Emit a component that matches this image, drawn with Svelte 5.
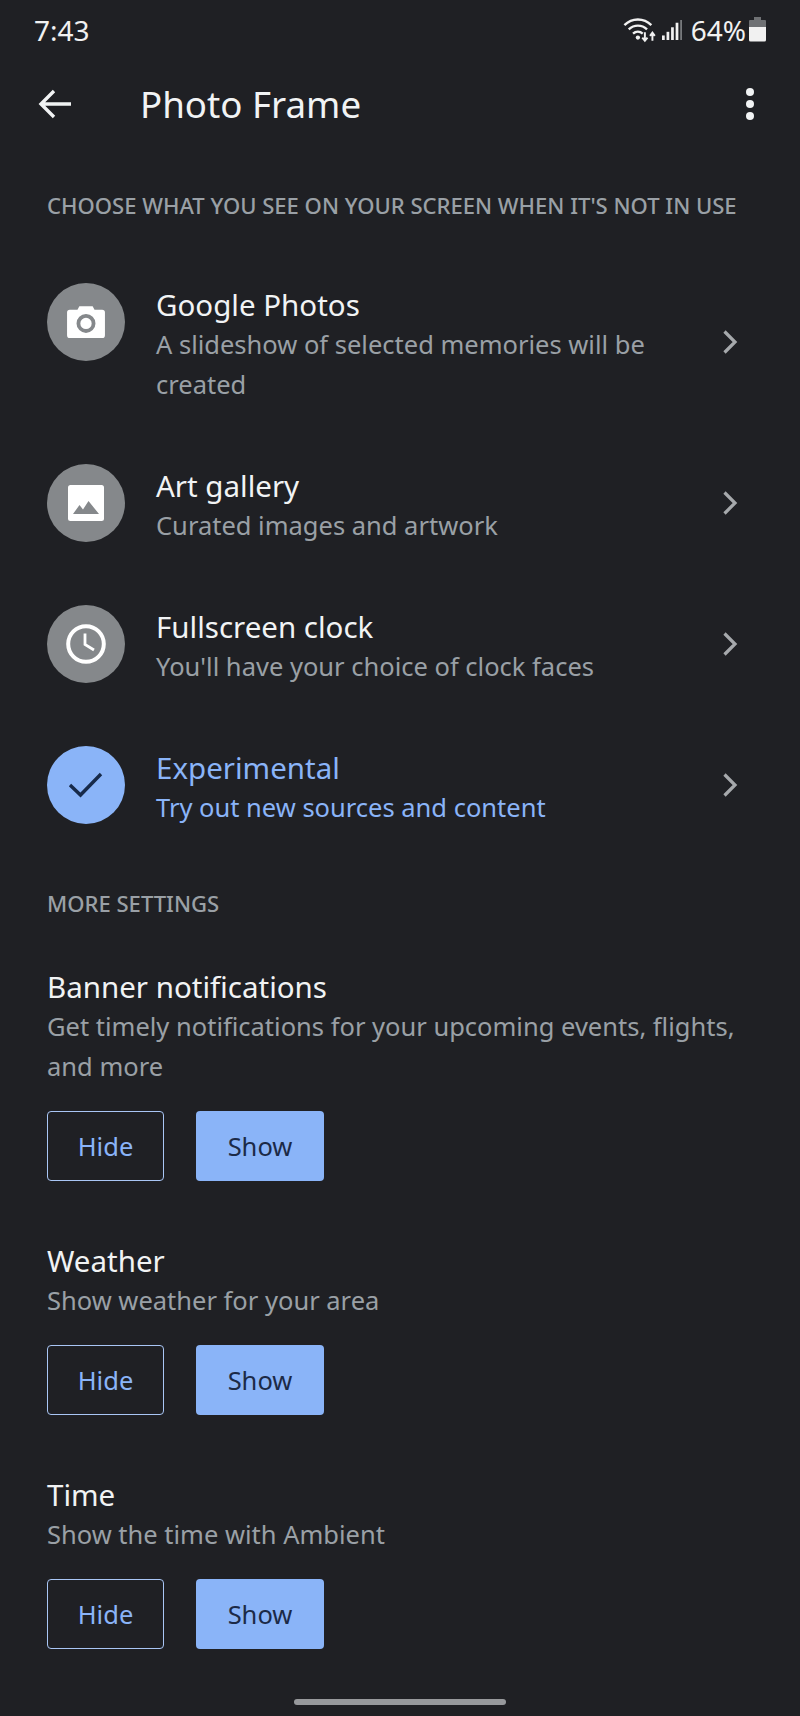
<script>
  const sources = [
    { title: 'Google Photos', sub: 'A slideshow of selected memories will be created', icon: 'camera' },
    { title: 'Art gallery', sub: 'Curated images and artwork', icon: 'image' },
    { title: 'Fullscreen clock', sub: "You'll have your choice of clock faces", icon: 'clock' },
    { title: 'Experimental', sub: 'Try out new sources and content', icon: 'check', active: true }
  ];
  const settings = [
    { title: 'Banner notifications', sub: 'Get timely notifications for your upcoming events, flights, and more' },
    { title: 'Weather', sub: 'Show weather for your area' },
    { title: 'Time', sub: 'Show the time with Ambient' }
  ];
</script>

<div class="page">
  <div class="status">
    <span class="clock">7:43</span>
    <div class="status-right">
      <svg class="wifi" width="35" height="28" viewBox="0 0 32 26" fill="none">
        <path d="M2 8.500C9 1.500 20 1.500 27 8.500" stroke="#f1f1f1" stroke-width="2.200" />
        <path d="M6 12.500C11 7.800 18 7.800 23 12.500" stroke="#f1f1f1" stroke-width="2.200" />
        <path d="M10 16.300C12.600 14 16.400 14 19 16.300" stroke="#f1f1f1" stroke-width="2.200" />
        <circle cx="14.500" cy="20" r="2" fill="#f1f1f1" />
        <path d="M21 15V22M18.600 20L21 23L23.400 20" stroke="#f1f1f1" stroke-width="1.800" />
        <path d="M28 23V16M25.800 18.500L28 15.500L30.200 18.500" stroke="#f1f1f1" stroke-width="1.800" />
      </svg>
      <svg class="signal" width="20" height="24" viewBox="0 0 22 24">
        <rect x="0" y="18" width="3" height="5" fill="#f1f1f1" />
        <rect x="5" y="14" width="3" height="9" fill="#f1f1f1" />
        <rect x="10" y="9" width="3" height="14" fill="#f1f1f1" />
        <rect x="15" y="4" width="3" height="19" fill="#f1f1f1" />
        <rect x="20" y="1" width="2" height="22" fill="#77797c" />
      </svg>
      <span class="pct">64%</span>
      <svg class="battery" width="17" height="25" viewBox="0 0 17 25">
        <path d="M5 0H12V3H16A1 1 0 0 1 17 4V11H0V4A1 1 0 0 1 1 3H5Z" fill="#6f7174" />
        <path d="M0 10H17V23A1.500 1.500 0 0 1 15.500 24.500H1.500A1.500 1.500 0 0 1 0 23Z" fill="#f1f1f1" />
      </svg>
    </div>
  </div>

  <header class="appbar">
    <svg class="back" width="34" height="32" viewBox="0 0 34 32" fill="none">
      <path d="M33 16H4M16 3L3 16L16 29" stroke="#f1f3f4" stroke-width="3.400" />
    </svg>
    <h1>Photo Frame</h1>
    <div class="menu"><i></i><i></i><i></i></div>
  </header>

  <h2 class="heading first">CHOOSE WHAT YOU SEE ON YOUR SCREEN WHEN IT'S NOT IN USE</h2>

  <div class="sources">
    {#each sources as s}
      <div class="source" class:active={s.active}>
        <div class="badge">
          {#if s.icon === 'camera'}
            <svg width="40" height="36" viewBox="0 0 42 38">
              <path fill-rule="evenodd" fill="#fff" d="M14 2.500H28L30 6H38A3 3 0 0 1 41 9V33A3 3 0 0 1 38 36H4A3 3 0 0 1 1 33V9A3 3 0 0 1 4 6H12ZM21 10.500A10 10 0 1 0 21 30.500A10 10 0 1 0 21 10.500ZM21 14.500A6 6 0 1 1 21 26.500A6 6 0 1 1 21 14.500Z" />
            </svg>
          {:else if s.icon === 'image'}
            <svg width="36" height="36" viewBox="0 0 36 36">
              <rect width="36" height="36" rx="2.500" fill="#fff" />
              <path d="M5 29L11.500 20L15 24.500L20.500 16L31 29Z" fill="#85888b" />
            </svg>
          {:else if s.icon === 'clock'}
            <svg width="40" height="40" viewBox="0 0 40 40" fill="none">
              <circle cx="20" cy="20" r="17.800" stroke="#fff" stroke-width="4" />
              <path d="M19 9.500V20.500L28 26" stroke="#fff" stroke-width="2.800" />
            </svg>
          {:else}
            <svg width="36" height="28" viewBox="0 0 36 28" fill="none">
              <path d="M2 14L12.500 24L33 3" stroke="#172a4a" stroke-width="3.400" />
            </svg>
          {/if}
        </div>
        <div class="source-text">
          <div class="title">{s.title}</div>
          <div class="sub">{s.sub}</div>
        </div>
        <svg class="chev" width="16" height="24" viewBox="0 0 16 24" fill="none">
          <path d="M2.500 1.500L13 12L2.500 22.500" stroke="#a6a9ac" stroke-width="3.200" />
        </svg>
      </div>
    {/each}
  </div>

  <h2 class="heading more">MORE SETTINGS</h2>

  <div class="settings">
    {#each settings as s}
      <section>
        <div class="title">{s.title}</div>
        <div class="sub">{s.sub}</div>
        <div class="buttons">
          <button class="hide">Hide</button>
          <button class="show">Show</button>
        </div>
      </section>
    {/each}
  </div>

  <div class="homebar"></div>
</div>

<style>
  :global(body) {
    margin: 0;
    background: #1f2024;
  }
  .page {
    box-sizing: border-box;
    width: 800px;
    height: 1716px;
    background: #1f2024;
    font-family: 'Noto Sans', 'Open Sans', sans-serif;
    color: #f1f3f4;
    overflow: hidden;
  }
  .status {
    height: 62px;
    box-sizing: border-box;
    padding: 0 34px 3px 34px;
    display: flex;
    align-items: center;
    justify-content: space-between;
  }
  .clock {
    font-size: 28px;
    color: #f1f1f1;
  }
  .status-right {
    display: flex;
    align-items: center;
  }
  .signal {
    margin-left: 5px;
  }
  .pct {
    font-size: 28px;
    margin: 0 3px 0 9px;
    color: #f1f1f1;
  }
  .appbar {
    height: 84px;
    display: flex;
    align-items: center;
    padding: 0 46px 0 38px;
  }
  .appbar h1 {
    font-size: 36.700px;
    font-weight: 400;
    margin: 0 0 0 68px;
    flex: 1;
    color: #f1f3f4;
  }
  .menu {
    display: flex;
    flex-direction: column;
    gap: 4px;
  }
  .menu i {
    width: 8px;
    height: 8px;
    border-radius: 50%;
    background: #f1f3f4;
  }
  .heading {
    margin: 0;
    padding-left: 47px;
    font-size: 22.050px;
    line-height: 30px;
    font-weight: 500;
    color: #9aa0a6;
    white-space: nowrap;
  }
  .first {
    margin-top: 44px;
  }
  .sources {
    margin-top: 63px;
    padding: 0 47px;
    display: flex;
    flex-direction: column;
    gap: 60px;
  }
  .source {
    display: flex;
    align-items: center;
  }
  .badge {
    width: 78px;
    height: 78px;
    border-radius: 50%;
    background: #85888b;
    display: flex;
    align-items: center;
    justify-content: center;
    flex: none;
    align-self: flex-start;
  }
  .active .badge {
    background: #8ab4f8;
  }
  .source-text {
    margin: 2px 0 0 31px;
    flex: 1;
    padding-right: 50px;
    min-width: 0;
  }
  .chev {
    flex: none;
    margin: 0 15px 4px 0;
  }
  .title {
    font-size: 29.500px;
    line-height: 39px;
    color: #f1f3f4;
  }
  .sub {
    font-size: 25.500px;
    line-height: 40px;
    color: #9aa0a6;
  }
  .active .title,
  .active .sub {
    color: #8ab4f8;
  }
  .more {
    margin-top: 61px;
  }
  .settings {
    margin-top: 49px;
    padding: 0 47px;
    display: flex;
    flex-direction: column;
    gap: 60px;
  }
  .buttons {
    margin-top: 25px;
    display: flex;
    gap: 32px;
  }
  button {
    box-sizing: border-box;
    height: 70px;
    border-radius: 4px;
    font: 400 25.500px 'Noto Sans', 'Open Sans', sans-serif;
    padding: 0;
  }
  .hide {
    width: 117px;
    background: transparent;
    border: 1.500px solid #a9c6f5;
    color: #8ab4f8;
  }
  .show {
    width: 128px;
    background: #8ab4f8;
    border: 0;
    color: #1c2a47;
  }
  .homebar {
    width: 212px;
    height: 6px;
    border-radius: 3px;
    background: #97999c;
    margin: 50px auto 0;
  }
</style>
